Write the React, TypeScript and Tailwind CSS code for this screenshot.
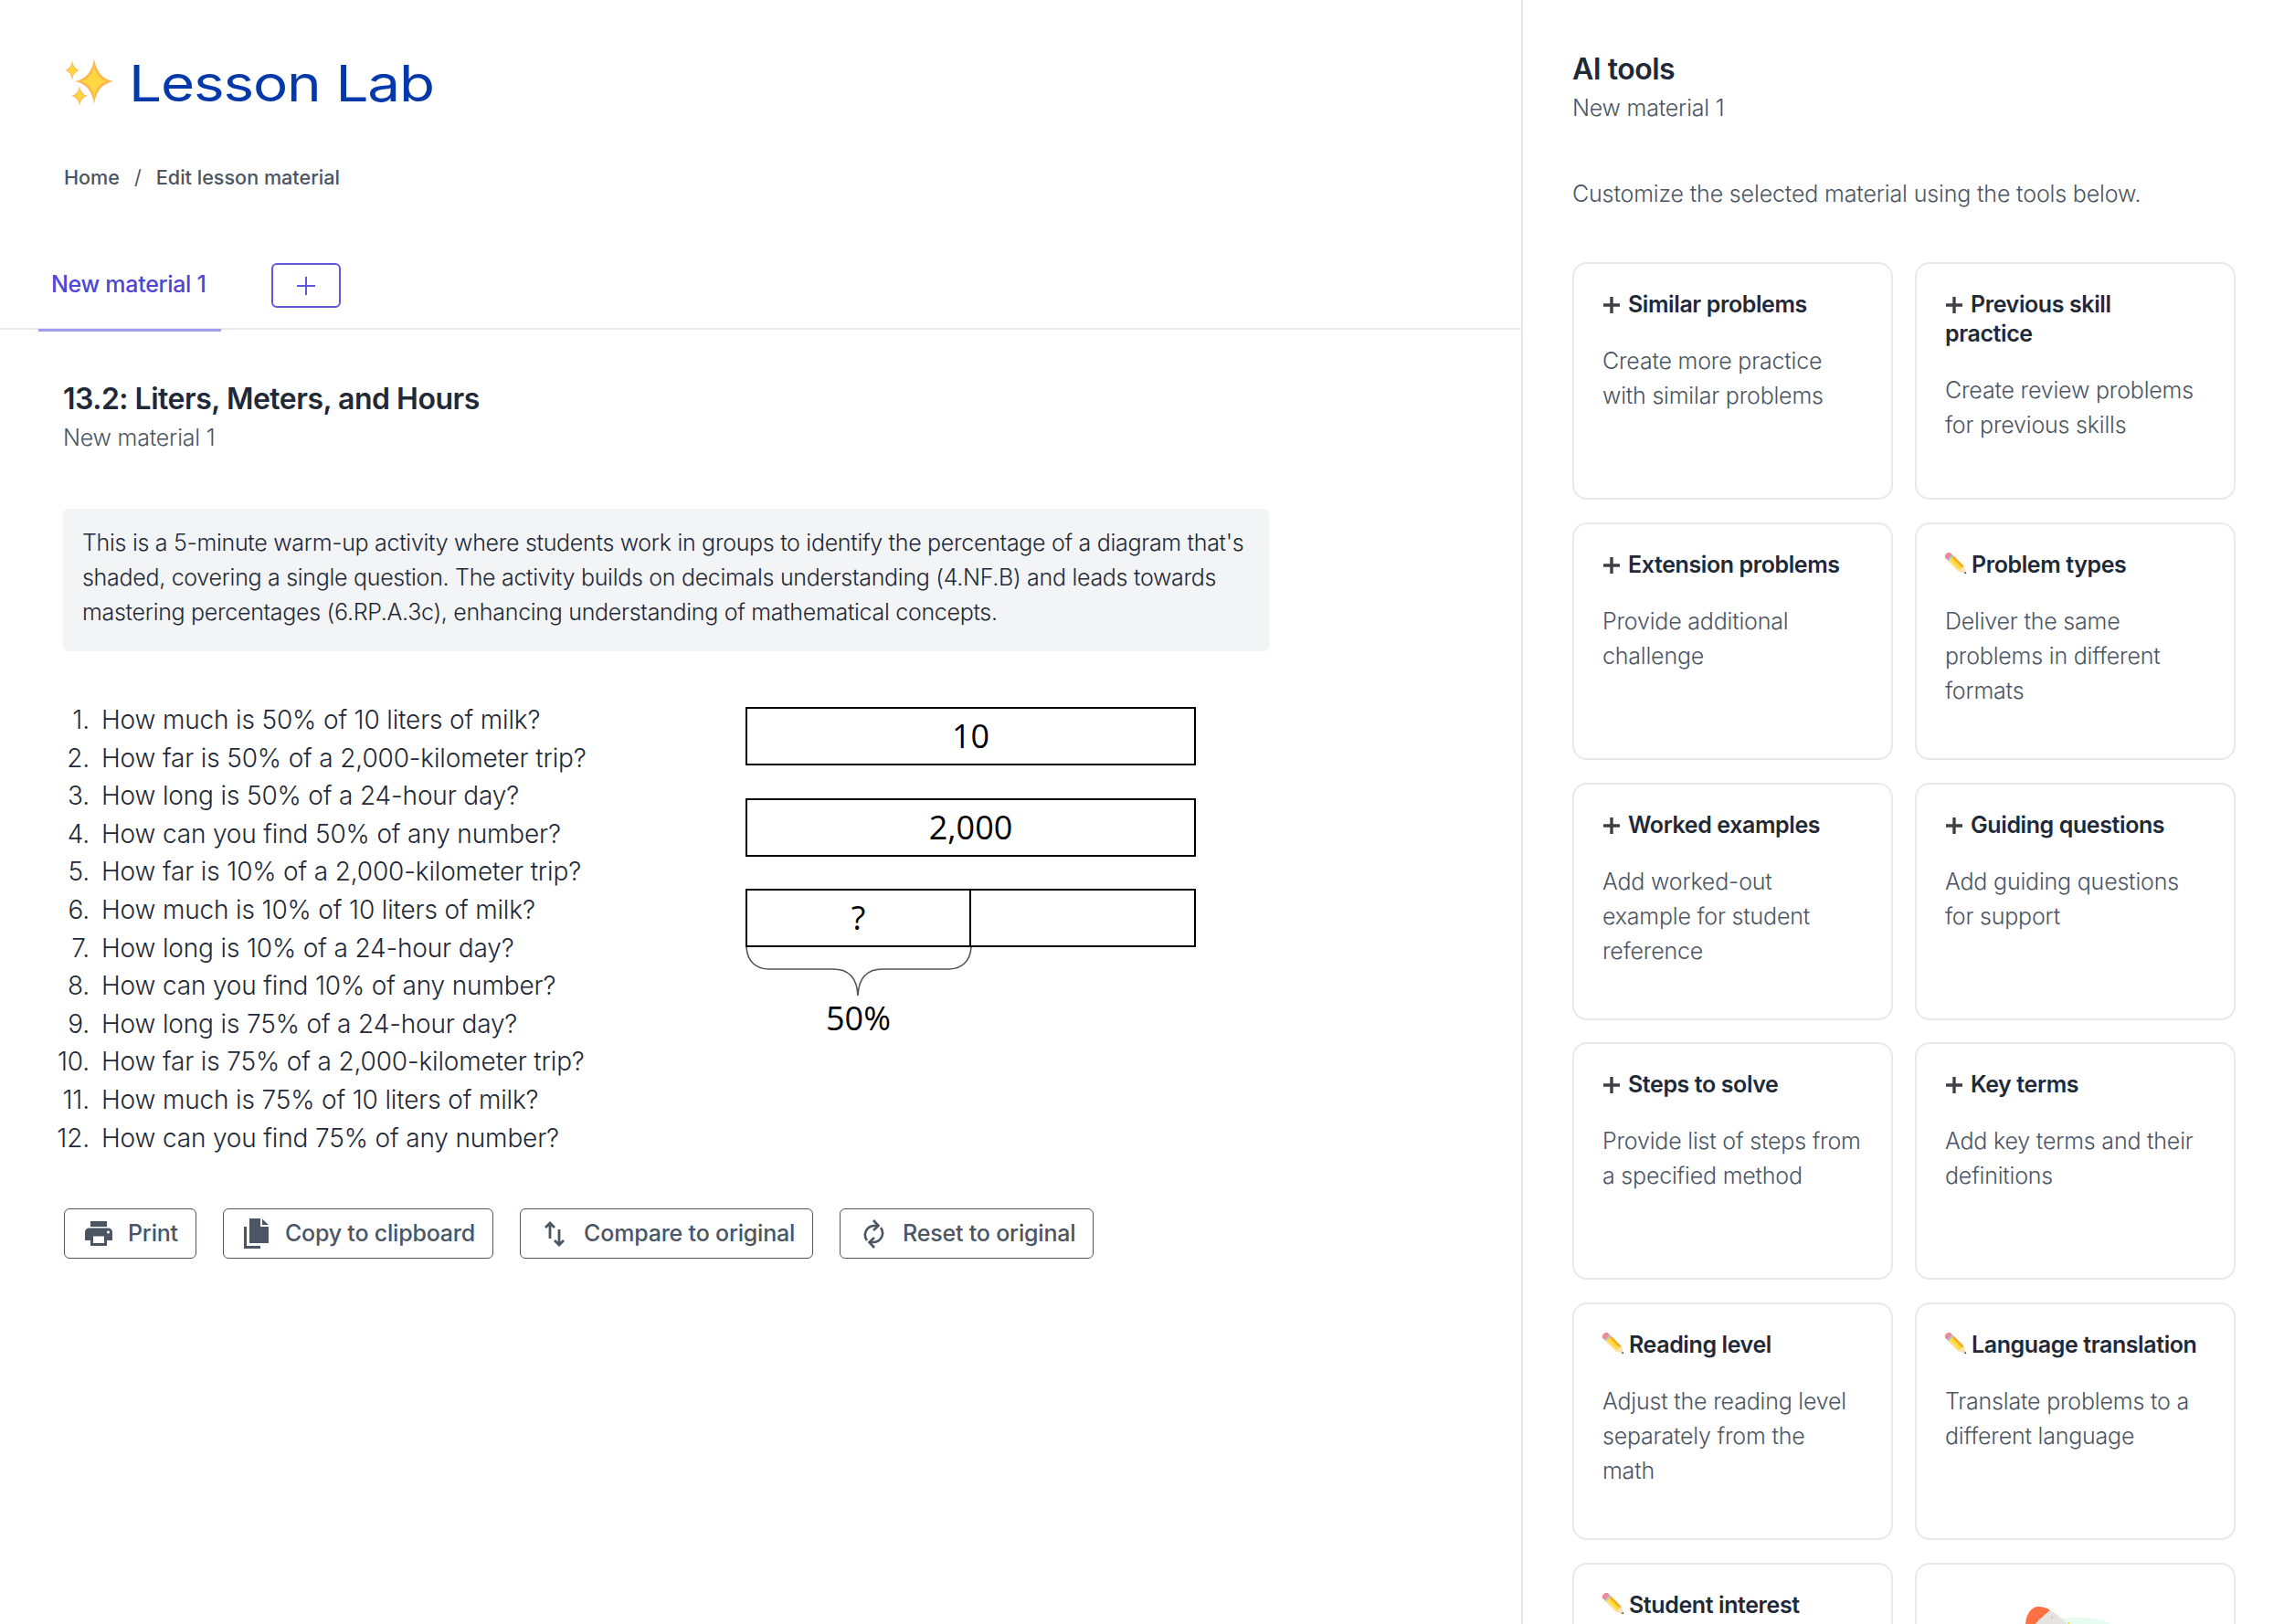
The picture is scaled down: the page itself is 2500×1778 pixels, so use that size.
const tools = [
  { id: 1, icon: "plus", title: "Similar problems", text: "Create more practice with similar problems" },
  { id: 2, icon: "plus", title: "Previous skill practice", text: "Create review problems for previous skills" },
  { id: 3, icon: "plus", title: "Extension problems", text: "Provide additional challenge" },
  { id: 4, icon: "pencil", title: "Problem types", text: "Deliver the same problems in different formats" },
  { id: 5, icon: "plus", title: "Worked examples", text: "Add worked-out example for student reference" },
  { id: 6, icon: "plus", title: "Guiding questions", text: "Add guiding questions for support" },
  { id: 7, icon: "plus", title: "Steps to solve", text: "Provide list of steps from a specified method" },
  { id: 8, icon: "plus", title: "Key terms", text: "Add key terms and their definitions" },
  { id: 9, icon: "pencil", title: "Reading level", text: "Adjust the reading level separately from the math" },
  { id: 10, icon: "pencil", title: "Language translation", text: "Translate problems to a different language" },
  { id: 11, icon: "pencil", title: "Student interest", text: "" },
];

const questions = [
  "How much is 50% of 10 liters of milk?",
  "How far is 50% of a 2,000-kilometer trip?",
  "How long is 50% of a 24-hour day?",
  "How can you find 50% of any number?",
  "How far is 10% of a 2,000-kilometer trip?",
  "How much is 10% of 10 liters of milk?",
  "How long is 10% of a 24-hour day?",
  "How can you find 10% of any number?",
  "How long is 75% of a 24-hour day?",
  "How far is 75% of a 2,000-kilometer trip?",
  "How much is 75% of 10 liters of milk?",
  "How can you find 75% of any number?",
];

function star(cx: number, cy: number, rx: number, ry: number) {
  const kx = rx * 0.14;
  const ky = ry * 0.14;
  return `M${cx} ${cy - ry} Q${cx + kx} ${cy - ky} ${cx + rx} ${cy} Q${cx + kx} ${cy + ky} ${cx} ${cy + ry} Q${cx - kx} ${cy + ky} ${cx - rx} ${cy} Q${cx - kx} ${cy - ky} ${cx} ${cy - ry}Z`;
}

function Sparkles() {
  return (
    <svg width="54" height="52" viewBox="0 0 54 52" className="shrink-0">
      <path d={star(32, 24, 21, 25)} fill="#ffb74d" />
      <path d={star(32, 24, 15, 18)} fill="#ffd740" />
      <path d={star(8, 12, 8, 11)} fill="#ffb74d" />
      <path d={star(8, 12, 6, 8)} fill="#ffd740" />
      <path d={star(16, 40, 9, 11)} fill="#ffb74d" />
      <path d={star(16, 40, 6.5, 8)} fill="#ffd740" />
    </svg>
  );
}

function Pencil() {
  return (
    <svg width="24" height="24" viewBox="0 0 24 24" className="shrink-0">
      <g transform="rotate(-45 12 12)">
        <rect x="8" y="-3" width="8" height="6" rx="2" fill="#ee8a93" />
        <rect x="8" y="2" width="8" height="2.5" fill="#b0bec5" />
        <rect x="8" y="4.5" width="8" height="15.5" fill="#fdd835" />
        <rect x="8" y="4.5" width="2.4" height="15.5" fill="#ffe082" />
        <rect x="13.6" y="4.5" width="2.4" height="15.5" fill="#f9a825" />
        <path d="M8 20 H16 L12 28Z" fill="#ffe0b2" />
        <path d="M10.8 25.6 H13.2 L12 28Z" fill="#37474f" />
      </g>
    </svg>
  );
}

function PlusIcon() {
  return (
    <svg width="20" height="20" viewBox="0 0 20 20" className="shrink-0">
      <path d="M10 1 V19 M1 10 H19" stroke="#3f3f46" strokeWidth="3.4" />
    </svg>
  );
}

function PrintIcon() {
  return (
    <svg width="30" height="27" viewBox="2 3 20 18" preserveAspectRatio="none" className="shrink-0" fill="#4b5563">
      <path d="M19 8H5c-1.66 0-3 1.34-3 3v6h4v4h12v-4h4v-6c0-1.66-1.34-3-3-3zm-3 11H8v-5h8v5zm3-7c-.55 0-1-.45-1-1s.45-1 1-1 1 .45 1 1-.45 1-1 1zm-1-9H6v4h12V3z" />
    </svg>
  );
}

function CopyIcon() {
  return (
    <svg width="27" height="33" viewBox="0 0 27 33" className="shrink-0" fill="#4b5563">
      <path d="M6 0 H18 V9 H27 V27 H6Z" />
      <path d="M20 0.5 L27 7 H20Z" />
      <path d="M0 9 H3 V30 H18 V33 H0Z" />
    </svg>
  );
}

function CompareIcon() {
  return (
    <svg width="22" height="28" viewBox="0 0 22 28" className="shrink-0" fill="none" stroke="#4b5563" strokeWidth="2.8">
      <path d="M6 19 V2 M1 7 L6 2 L11 7" />
      <path d="M16 9 V26 M11 21 L16 26 L21 21" />
    </svg>
  );
}

function ResetIcon() {
  return (
    <svg width="23" height="32" viewBox="0 0 23 32" className="shrink-0" fill="none" stroke="#4b5563" strokeWidth="2.6">
      <path d="M4 23 A10 10 0 0 1 11.5 7 H16" />
      <path d="M19 9 A10 10 0 0 1 11.5 25 H7" />
      <path d="M11 1 L16.5 7 L11 12" />
      <path d="M12 20 L6.5 25 L12 31" />
    </svg>
  );
}

function Brace() {
  return (
    <svg width="248" height="54" viewBox="0 0 248 54" className="block" fill="none" stroke="#555" strokeWidth="1.6">
      <path d="M1 0 C2 16 12 24 26 24 H96 C112 24 122 32 123 53 C124 32 134 24 150 24 H222 C236 24 246 16 247 0" />
    </svg>
  );
}

function Megaphone() {
  return (
    <svg width="110" height="23" viewBox="0 0 110 23" className="block">
      <path d="M0 23 C20 18 34 14 62 14 C86 14 96 18 101 23Z" fill="#e8fbf1" />
      <path d="M5 23 C5 10 12 2 19 2 C24 2 28 3 32 6 L14 23Z" fill="#ff7043" />
      <path d="M32 6 C40 10 46 16 52 23 H14 C20 16 26 11 32 6Z" fill="#e6e4e1" />
      <circle cx="26" cy="11" r="1" fill="#bdbdbd" />
      <circle cx="20" cy="16" r="1" fill="#bdbdbd" />
      <circle cx="34" cy="14" r="1" fill="#bdbdbd" />
      <path d="M52 19 L56 23 H50Z" fill="#fdd835" />
    </svg>
  );
}

function Button({ icon, label, padding, gap }: { icon: React.ReactNode; label: string; padding: string; gap: string }) {
  return (
    <button className={`flex h-[55px] items-center ${padding} ${gap} rounded-md border-[1.5px] border-[#4b5563] pr-[19px] text-[25px] font-medium tracking-[-0.2px] text-[#4b5563]`}>
      {icon}
      <span>{label}</span>
    </button>
  );
}

function ToolCard({ tool }: { tool: (typeof tools)[number] }) {
  return (
    <div className="h-[260px] rounded-[16px] border-2 border-[#e8e9eb] px-[31px] pt-[28px]">
      <div className="w-[280px] text-[25px] leading-[32px] font-semibold tracking-[-0.4px] text-[#1f2937]">
        <span className={`inline-block align-[-2px] ${tool.icon === "plus" ? "mr-[8px]" : "mr-[5px]"}`}>
          {tool.icon === "plus" ? <PlusIcon /> : <Pencil />}
        </span>
        {tool.title}
      </div>
      <p className="mt-[27px] text-[25px] leading-[38px] font-light tracking-[-0.2px] text-[#4b5563]">{tool.text}</p>
    </div>
  );
}

export default function App() {
  return (
    <div className="flex h-screen overflow-hidden bg-white font-['Inter',sans-serif] text-[#1f2937]">
      <main className="w-[1667px] shrink-0 border-r-2 border-[#e5e7eb]">
        <div className="mt-[60px] flex h-[62px] items-center gap-[16px] pl-[71px]">
          <Sparkles />
          <h1 className="origin-left scale-x-[1.16] text-[55px] font-normal tracking-[-1px] text-[#0439ab]">Lesson Lab</h1>
        </div>
        <nav className="mt-[57px] flex h-[30px] items-center pl-[70px] text-[21.6px] font-medium text-[#4b5563]">
          <span>Home</span>
          <span className="mx-[16px] font-normal">/</span>
          <span>Edit lesson material</span>
        </nav>
        <div className="mt-[79px] flex h-[73px] items-start border-b-2 border-[#e5e7eb]">
          <div className="relative ml-[42px] h-[73px] w-[200px] pl-[14px] pt-[6px] text-[25px] leading-[34px] font-medium tracking-[-0.3px] text-[#5046d5]">
            New material 1
            <div className="absolute bottom-[-2px] left-0 h-[3px] w-full bg-[#a29bf0]" />
          </div>
          <button className="ml-[55px] flex h-[49px] w-[76px] items-center justify-center rounded-md border-2 border-[#5f58dd]">
            <svg width="20" height="20" viewBox="0 0 20 20">
              <path d="M10 0 V20 M0 10 H20" stroke="#5f58dd" strokeWidth="2" />
            </svg>
          </button>
        </div>
        <section className="px-[69px] pt-[54px]">
          <h2 className="text-[32px] leading-[44px] font-semibold tracking-[-0.5px] text-[#1f2937]">13.2: Liters, Meters, and Hours</h2>
          <p className="mt-[2px] text-[25px] leading-[36px] font-light tracking-[-0.2px] text-[#4b5563]">New material 1</p>
          <div className="mt-[60px] w-[1320px] rounded-md bg-[#f3f4f6] px-[21px] pt-[18px] pb-[24px] text-[25px] leading-[38px] font-light tracking-[-0.3px] text-[#1f2937]">
            This is a 5-minute warm-up activity where students work in groups to identify the percentage of a diagram that's shaded, covering a single question. The activity builds on decimals understanding (4.NF.B) and leads towards mastering percentages (6.RP.A.3c), enhancing understanding of mathematical concepts.
          </div>
          <div className="mt-[55px] flex">
            <ol className="w-[747px] text-[28px] leading-[41.6px] font-light tracking-[-0.15px] text-[#1f2937]">
              {questions.map((q, i) => (
                <li key={q} className="flex">
                  <span className="-ml-[10px] w-[52px] pr-[13px] text-right">{i + 1}.</span>
                  <span>{q}</span>
                </li>
              ))}
            </ol>
            <div className="pt-[6px] font-['Open_Sans',sans-serif] text-[36px] text-black">
              <div className="flex h-[64px] w-[493px] items-center justify-center border-[2.5px] border-black">10</div>
              <div className="mt-[35.5px] flex h-[64px] w-[493px] items-center justify-center border-[2.5px] border-black">2,000</div>
              <div className="mt-[35.5px] flex h-[64px] w-[493px] border-[2.5px] border-black">
                <div className="flex w-[245px] items-center justify-center border-r-2 border-black">?</div>
              </div>
              <Brace />
              <div className="w-[247px] text-center leading-[48px]">50%</div>
            </div>
          </div>
          <div className="mt-[56px] ml-[1px] flex gap-[29px]">
            <Button icon={<PrintIcon />} label="Print" padding="pl-[22px]" gap="gap-[17px]" />
            <Button icon={<CopyIcon />} label="Copy to clipboard" padding="pl-[22px]" gap="gap-[18px]" />
            <Button icon={<CompareIcon />} label="Compare to original" padding="pl-[26px]" gap="gap-[21px]" />
            <Button icon={<ResetIcon />} label="Reset to original" padding="pl-[25px]" gap="gap-[20px]" />
          </div>
        </section>
      </main>
      <aside className="flex-1 px-[54px] pt-[54px]">
        <h2 className="text-[32px] leading-[44px] font-semibold tracking-[-0.5px] text-[#1f2937]">AI tools</h2>
        <p className="mt-[2px] text-[25px] leading-[36px] font-light tracking-[-0.2px] text-[#4b5563]">New material 1</p>
        <p className="mt-[57px] text-[25px] leading-[38px] font-light tracking-[-0.15px] text-[#4b5563]">Customize the selected material using the tools below.</p>
        <div className="mt-[56px] grid grid-cols-[351px_351px] gap-x-[24px] gap-y-[24.75px]">
          {tools.map((tool) => (
            <ToolCard key={tool.id} tool={tool} />
          ))}
          <div className="flex h-[260px] justify-center rounded-[16px] border-2 border-[#e8e9eb] pt-[44px] pr-[10px]">
            <div>
              <Megaphone />
            </div>
          </div>
        </div>
      </aside>
    </div>
  );
}
